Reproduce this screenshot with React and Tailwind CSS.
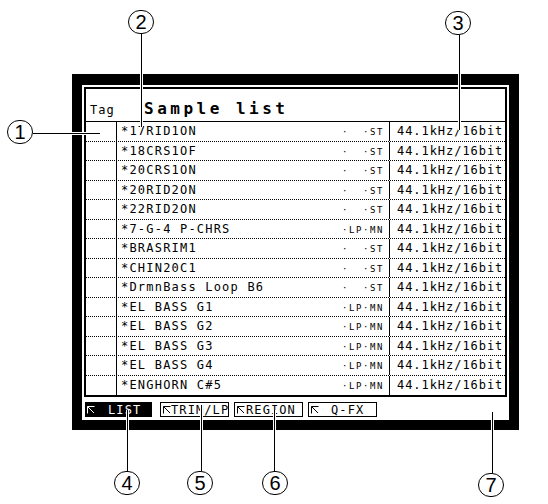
import React from 'react';

// sample rows: name, looped mono (true) or stereo (false)
const samples = [
  ['17RID1ON', false],
  ['18CRS1OF', false],
  ['20CRS1ON', false],
  ['20RID2ON', false],
  ['22RID2ON', false],
  ['7-G-4 P-CHRS', true],
  ['BRASRIM1', false],
  ['CHIN20C1', false],
  ['DrmnBass Loop B6', false],
  ['EL BASS G1', true],
  ['EL BASS G2', true],
  ['EL BASS G3', true],
  ['EL BASS G4', true],
  ['ENGHORN C#5', true],
];

const mono = "font-['DejaVu_Sans_Mono','Liberation_Mono',monospace]";

function TabMark({ light }) {
  return (
    <svg width="8" height="8" viewBox="0 0 8 8" className="shrink-0">
      <path d="M0.5 0.5 H7.5 M0.5 0.5 V7.5 M0.5 0.5 L7 7" stroke={light ? '#fff' : '#000'} strokeWidth="1" fill="none" />
    </svg>
  );
}

function SampleRow({ name, loop, last }) {
  return (
    <div className={`flex h-[19.5px] ${last ? '' : 'border-b border-dotted border-black'}`}>
      <div className="w-[31px] border-r border-black" />
      <div className="w-[273px] border-r border-black flex items-center pl-[4px] pr-[5px]">
        <div className="flex flex-1 items-baseline">
          <span className="text-[12px] leading-none tracking-[1.2px] whitespace-pre">*{name}</span>
          <span className="ml-auto text-[9px] leading-none tracking-[1.6px] whitespace-pre">
            {loop ? '·LP·MN' : '·  ·ST'}
          </span>
        </div>
      </div>
      <div className="flex-1 flex items-center pl-[7px]">
        <span className="text-[12px] leading-none tracking-[0.95px]">44.1kHz/16bit</span>
      </div>
    </div>
  );
}

function Tab({ label, active, textClass, w }) {
  return (
    <div
      className={`${w} h-[15px] flex items-center pl-[2px] ${
        active ? 'bg-black text-white' : 'border border-black'
      }`}
    >
      <TabMark light={active} />
      <span className={`text-[12px] leading-none tracking-[1.1px] ${textClass}`}>{label}</span>
    </div>
  );
}

function Callout({ n, pos }) {
  return (
    <div
      className={`absolute ${pos} w-[26px] h-[24px] rounded-full border border-black bg-white flex items-center justify-center font-['Liberation_Sans',Arial,sans-serif] text-[20px] leading-none`}
    >
      {n}
    </div>
  );
}

export default function App() {
  return (
    <div className={`relative w-[548px] h-[504px] bg-white overflow-hidden pt-[74px] pl-[72px] text-black ${mono}`}>
      {/* LCD bezel */}
      <div className="w-[447px] bg-black pt-[11px] px-[10px] pb-[10px]">
        <div className="bg-white p-[2px] pb-[3px]">
          <div className="border-2 border-black">
            {/* title bar */}
            <div className="h-[33px] border-b border-black flex items-baseline pt-[12px]">
              <span className="w-[31px] pl-[4px] text-[12px] leading-none tracking-[1px]">Tag</span>
              <span className="ml-[27px] text-[16px] font-bold leading-none tracking-[3.5px]">Sample list</span>
            </div>
            {samples.map(([name, loop], i) => (
              <SampleRow key={i} name={name} loop={loop} last={i === samples.length - 1} />
            ))}
          </div>
          {/* page tabs */}
          <div className="mt-[5px] ml-[1px] flex h-[15px]">
            <Tab label="LIST" active w="w-[67px]" textClass="ml-[13px]" />
            <div className="ml-[8px]">
              <Tab label="TRIM/LP" w="w-[69px]" textClass="" />
            </div>
            <div className="ml-[5px]">
              <Tab label="REGION" w="w-[69px]" textClass="ml-[1px]" />
            </div>
            <div className="ml-[5px]">
              <Tab label="Q-FX" w="w-[69px]" textClass="ml-[12px]" />
            </div>
          </div>
        </div>
      </div>

      {/* leader lines */}
      <div className="absolute left-[33px] top-[132px] w-[67px] h-[3px] bg-black border-y border-white" />
      <div className="absolute left-[140px] top-[34px] w-[3px] h-[93px] bg-black border-x border-white" />
      <div className="absolute left-[458px] top-[35px] w-[3px] h-[95px] bg-black border-x border-white" />
      <div className="absolute left-[126px] top-[410px] w-[3px] h-[61px] bg-black border-x border-white" />
      <div className="absolute left-[200px] top-[405px] w-[3px] h-[66px] bg-black border-x border-white" />
      <div className="absolute left-[273px] top-[410px] w-[3px] h-[61px] bg-black border-x border-white" />
      <div className="absolute left-[491px] top-[412px] w-[3px] h-[61px] bg-black border-x border-white" />

      <Callout n="1" pos="left-[7px] top-[120px]" />
      <Callout n="2" pos="left-[128px] top-[10px]" />
      <Callout n="3" pos="left-[445px] top-[11px]" />
      <Callout n="4" pos="left-[114px] top-[471px]" />
      <Callout n="5" pos="left-[187px] top-[471px]" />
      <Callout n="6" pos="left-[262px] top-[471px]" />
      <Callout n="7" pos="left-[478px] top-[473px]" />
    </div>
  );
}
